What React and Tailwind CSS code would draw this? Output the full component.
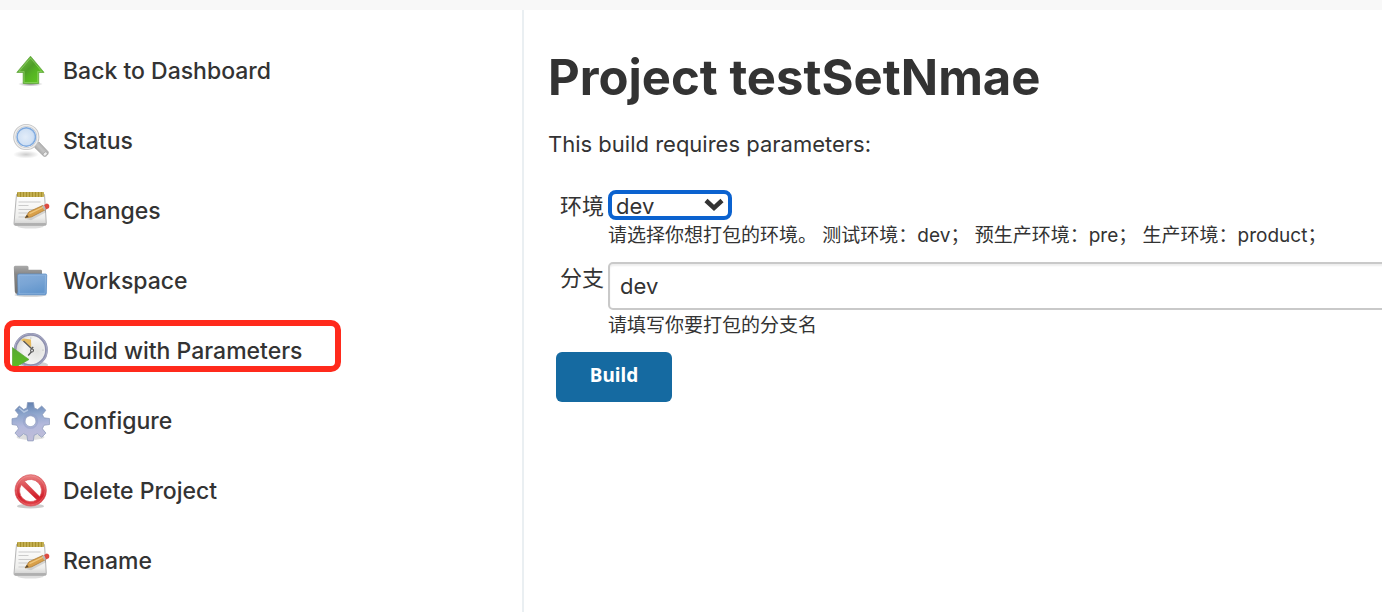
import React from "react";

function UpArrowIcon() {
  return (
    <svg viewBox="0 0 36 36" className="size-9" aria-hidden="true">
      <defs>
        <linearGradient id="up-fill" x1="0" y1="0" x2="1" y2="1">
          <stop offset="0" stopColor="#7fc94e" />
          <stop offset="0.45" stopColor="#4f9e28" />
          <stop offset="0.6" stopColor="#55b322" />
          <stop offset="1" stopColor="#62cc20" />
        </linearGradient>
        <radialGradient id="up-shadow">
          <stop offset="0" stopColor="#000" stopOpacity="0.45" />
          <stop offset="1" stopColor="#000" stopOpacity="0" />
        </radialGradient>
      </defs>
      <ellipse cx="18.500" cy="31" rx="12.500" ry="2.500" fill="url(#up-shadow)" />
      <path d="M18.500 3.200 32 19.400H26.700V30.500H11.200V19.400H4.800Z" fill="url(#up-fill)" stroke="#63a83f" strokeWidth="0.800" strokeLinejoin="round" />
      <path d="M18.500 5 29.700 18.500H25.700V29.500H12.200V18.500H7Z" fill="none" stroke="#b0e58c" strokeOpacity="0.5" strokeWidth="0.900" />
    </svg>
  );
}

function SearchIcon() {
  return (
    <svg viewBox="0 0 36 36" className="size-9 overflow-visible" aria-hidden="true">
      <defs>
        <radialGradient id="lens" cx="0.45" cy="0.5" r="0.6">
          <stop offset="0" stopColor="#e3edf9" />
          <stop offset="0.7" stopColor="#cfe0f4" />
          <stop offset="1" stopColor="#a3c4ea" />
        </radialGradient>
        <radialGradient id="lens-shadow">
          <stop offset="0" stopColor="#000" stopOpacity="0.2" />
          <stop offset="1" stopColor="#000" stopOpacity="0" />
        </radialGradient>
        <linearGradient id="handle" x1="0" y1="1" x2="1" y2="0">
          <stop offset="0" stopColor="#858585" />
          <stop offset="0.5" stopColor="#c4c4c4" />
          <stop offset="1" stopColor="#8a8a8a" />
        </linearGradient>
      </defs>
      <ellipse cx="14" cy="31.500" rx="13" ry="4" fill="url(#lens-shadow)" />
      <path d="m23.500 22 3.500-3 9 9.500c1.500 2-2.200 6.300-4.500 4.500L22.700 24.500Z" fill="url(#handle)" stroke="#999" strokeWidth="0.600" />
      <ellipse cx="33.200" cy="31" rx="2.300" ry="1.700" transform="rotate(-45 33.200 31)" fill="#eee" stroke="#999" strokeWidth="0.600" />
      <circle cx="14.300" cy="14" r="11.700" fill="#fff" stroke="#c4c4c4" strokeWidth="2.800" />
      <circle cx="14.300" cy="14" r="11.500" fill="none" stroke="#eee" strokeWidth="1.400" />
      <circle cx="14.300" cy="14" r="9.300" fill="url(#lens)" stroke="#7ea9de" strokeWidth="1.500" />
    </svg>
  );
}

function NotepadIcon({ id }) {
  return (
    <svg viewBox="0 0 36 36" className="size-9 overflow-visible" aria-hidden="true">
      <defs>
        <linearGradient id={id} x1="0" y1="0" x2="0" y2="1">
          <stop offset="0" stopColor="#fff" />
          <stop offset="0.75" stopColor="#eeeeec" />
          <stop offset="1" stopColor="#ccc" />
        </linearGradient>
      </defs>
      <ellipse cx="18.500" cy="33.500" rx="13" ry="2" fill="#000" fillOpacity="0.13" />
      <path d="M4.500 1.500h28l1.800 29q.2 2-1.800 2H4q-2.200 0-2-2Z" fill={`url(#${id})`} stroke="#b5b5b5" strokeWidth="1" />
      <path d="M2.500 31h31.300" stroke="#999" strokeWidth="1.200" />
      <rect x="5" y="-1" width="27" height="5" rx="1" fill="#a8912e" />
      <path d="M7-1v5m3-5v5m3-5v5m3-5v5m3-5v5m3-5v5m3-5v5m3-5v5m3-5v5" stroke="#d5c268" strokeWidth="1.200" />
      <path d="M6.500 9h22M6.500 12.500h10M6.500 16.500h18M6.500 20h14M6.500 24h9" stroke="#cbcbcb" strokeWidth="1" />
      <path d="m14 26 5 1.300 15-8v-3Z" fill="#000" fillOpacity="0.12" />
      <path d="m13 25 4-6.200 14-6.500 2.500 4.400-14 7.200Z" fill="#d9a04a" stroke="#a87a38" strokeWidth="0.700" />
      <path d="m17.500 20.700 14-6.700" stroke="#f0c77c" strokeWidth="1.300" />
      <path d="m13 25 2-3.300 1.700 2.400Z" fill="#5d4b33" />
      <path d="m30 13 2.200 4.200 1.700-.9-2.100-4.200Z" fill="#b8b8b8" />
      <path d="m32 12 2.200 4.400 2.800-1.500q1.300-3.500-2.300-4.400Z" fill="#dc4a40" />
    </svg>
  );
}

function FolderIcon() {
  return (
    <svg viewBox="0 0 36 36" className="size-9" aria-hidden="true">
      <defs>
        <linearGradient id="folder-back" x1="0" y1="0" x2="0" y2="1">
          <stop offset="0" stopColor="#aaa" />
          <stop offset="0.3" stopColor="#868686" />
          <stop offset="1" stopColor="#707070" />
        </linearGradient>
        <linearGradient id="folder-front" x1="0" y1="0" x2="0.4" y2="1">
          <stop offset="0" stopColor="#86add9" />
          <stop offset="0.5" stopColor="#7aa5d5" />
          <stop offset="1" stopColor="#6497cd" />
        </linearGradient>
      </defs>
      <ellipse cx="18.500" cy="32" rx="16" ry="2" fill="#000" fillOpacity="0.15" />
      <path d="M1.800 4.300q0-1.500 1.500-1.500H15q1.500 0 1.500 1.500v2.500h12.300q1.200 0 1.200 1.300V31H5.500q-2.500 0-2.700-2.500Z" fill="url(#folder-back)" />
      <path d="M7 11h26.500q1.300 0 1.200 1.300L34.300 30.500q-.1 1.300-1.400 1.300H5Q6 30.500 6 28.500L5.700 12.300q0-1.300 1.300-1.300Z" fill="url(#folder-front)" stroke="#5f8fc5" strokeWidth="0.800" />
      <path d="M6.800 12.100h26.700l-.4 18.300H7Z" fill="none" stroke="#a9c7e9" strokeOpacity="0.5" strokeWidth="0.800" />
    </svg>
  );
}

function ClockPlayIcon() {
  return (
    <svg viewBox="0 0 36 36" className="size-9" aria-hidden="true">
      <defs>
        <radialGradient id="dial" cx="0.7" cy="0.55" r="0.7">
          <stop offset="0" stopColor="#e2e2df" />
          <stop offset="0.6" stopColor="#f4f4f3" />
          <stop offset="1" stopColor="#d7d7d5" />
        </radialGradient>
        <linearGradient id="play" x1="0" y1="0" x2="0" y2="1">
          <stop offset="0" stopColor="#58a832" />
          <stop offset="1" stopColor="#5cc022" />
        </linearGradient>
      </defs>
      <ellipse cx="22" cy="32" rx="14" ry="3.500" fill="#000" fillOpacity="0.18" />
      <circle cx="18.800" cy="17" r="15.700" fill="url(#dial)" stroke="#8d8fae" strokeWidth="2.800" />
      <circle cx="18.800" cy="17" r="16.300" fill="none" stroke="#b6b7ce" strokeWidth="0.700" />
      <path d="m9 7 2.500-1.500 7.500 1 .3 8Z" fill="#e6bb60" />
      <path d="m11.500 8 9.500 9-4.800 5.500M19.500 15.500l1.800-1.500" fill="none" stroke="#5a5a5a" strokeWidth="1.300" />
      <circle cx="20" cy="17.500" r="1.900" fill="#555" />
      <circle cx="20" cy="17.500" r="0.900" fill="#eee" />
      <circle cx="31" cy="17" r="0.600" fill="#aaa" />
      <circle cx="18.800" cy="5" r="0.600" fill="#aaa" />
      <path d="M.3 14.500 17 26.500 .3 36Z" fill="url(#play)" stroke="#5ba53a" strokeWidth="0.700" />
    </svg>
  );
}

function GearIcon() {
  return (
    <svg viewBox="0 0 36 36" className="size-9 overflow-visible" aria-hidden="true">
      <defs>
        <linearGradient id="gear" x1="0.5" y1="0" x2="0.6" y2="1">
          <stop offset="0" stopColor="#6482b0" />
          <stop offset="0.3" stopColor="#8ea6cd" />
          <stop offset="0.6" stopColor="#b4b9dc" />
          <stop offset="1" stopColor="#c0bdd8" />
        </linearGradient>
      </defs>
      <ellipse cx="18.500" cy="34" rx="14" ry="3" fill="#000" fillOpacity="0.13" />
      <path
        fillRule="evenodd"
        d="M15.500-.5h6l.8 5.500 3.400 1.500 4-3.500 4.200 4.200-3.500 4.300 1.500 3.300 5.600.7v6l-5.600.8-1.500 3.500 3.500 4.300-4.200 4.200-4.300-3.500-3.300 1.500-.8 5.600h-5.600l-.8-5.600-3.500-1.500-4.300 3.500-4.100-4.200 3.500-4.300-1.500-3.500L0 21.500v-5.800l5.200-.9 1.400-3.300-3.500-4.300L7.300 3l4.300 3.500L14.800 5ZM18.500 12.800a5.400 5.400 0 1 0 .01 0Z"
        fill="url(#gear)"
        stroke="#8796b8"
        strokeWidth="0.700"
        strokeLinejoin="round"
      />
      <circle cx="18.500" cy="18.200" r="7" fill="none" stroke="#8b98c2" strokeOpacity="0.400" strokeWidth="1.500" />
      <path d="M7 5 12 9l4-2" fill="none" stroke="#d6e2f3" strokeOpacity="0.600" strokeWidth="1.500" />
    </svg>
  );
}

function ForbiddenIcon() {
  return (
    <svg viewBox="0 0 36 36" className="size-9" aria-hidden="true">
      <defs>
        <linearGradient id="ban" x1="0" y1="0" x2="0" y2="1">
          <stop offset="0" stopColor="#e98384" />
          <stop offset="0.4" stopColor="#dc4a50" />
          <stop offset="0.7" stopColor="#d21f2b" />
          <stop offset="1" stopColor="#e34b50" />
        </linearGradient>
      </defs>
      <ellipse cx="18.500" cy="33.200" rx="13.500" ry="2.300" fill="#000" fillOpacity="0.2" />
      <path
        fillRule="evenodd"
        d="M18.700 1.700a15.700 15.700 0 1 0 .01 0ZM12.400 8.300a11 11 0 0 1 15.300 15.200ZM9.300 11.700 24.800 26.700A11 11 0 0 1 9.300 11.700Z"
        fill="url(#ban)"
        stroke="#d9555a"
        strokeWidth="0.700"
      />
      <circle cx="18.700" cy="17.400" r="14.500" fill="none" stroke="#f5a9a9" strokeOpacity="0.400" strokeWidth="0.800" />
    </svg>
  );
}

const tasks = [
  { label: "Back to Dashboard", icon: <UpArrowIcon /> },
  { label: "Status", icon: <SearchIcon /> },
  { label: "Changes", icon: <NotepadIcon id="paper-changes" /> },
  { label: "Workspace", icon: <FolderIcon /> },
  { label: "Build with Parameters", icon: <ClockPlayIcon />, marked: true },
  { label: "Configure", icon: <GearIcon /> },
  { label: "Delete Project", icon: <ForbiddenIcon /> },
  { label: "Rename", icon: <NotepadIcon id="paper-rename" /> },
];

function TaskLink({ label, icon, marked }) {
  return (
    <li className="relative">
      <a href="#" className="flex h-[70px] items-center gap-[15px] pl-3 text-[23px] font-medium">
        {icon}
        <span>{label}</span>
      </a>
      {marked && (
        <span className="pointer-events-none absolute top-1 left-1 h-[52px] w-[337px] rounded-[10px] border-6 border-[#ff2a1c]" />
      )}
    </li>
  );
}

export default function App() {
  return (
    <div className="flex min-h-screen flex-col overflow-hidden bg-white font-['Inter','Noto_Sans_CJK_SC',sans-serif] text-[#333]">
      <header className="h-[10px] bg-[#f8f8f8]" />
      <div className="flex flex-1">
        <nav className="w-[524px] shrink-0 border-r-2 border-[#eaeff2] pt-[26px]">
          <ul>
            {tasks.map((task) => (
              <TaskLink key={task.label} {...task} />
            ))}
          </ul>
        </nav>
        <main className="min-w-0 flex-1 pt-9 pl-6">
          <h1 className="text-[49px] leading-[64px] font-bold">Project testSetNmae</h1>
          <p className="mt-5 text-[22px] leading-[28px]">This build requires parameters:</p>
          <form className="-mr-2 pt-8 pl-2" onSubmit={(e) => e.preventDefault()}>
            <div className="grid grid-cols-[auto_1fr] gap-x-1 pl-1 text-[22px]">
              <label htmlFor="env" className="leading-[32px]">环境</label>
              <div>
                <div className="relative w-[124px]">
                  <select
                    id="env"
                    defaultValue="dev"
                    className="block h-[30px] w-full appearance-none rounded-[8px] border-4 border-[#0b62cf] bg-white pt-px pl-1 leading-[22px] outline-none"
                  >
                    <option>dev</option>
                    <option>pre</option>
                    <option>product</option>
                  </select>
                  <svg viewBox="0 0 20 14" className="pointer-events-none absolute top-2 right-2 h-[14px] w-5" aria-hidden="true">
                    <path d="m2 2.500 8 7.500 8-7.500" fill="none" stroke="#333" strokeWidth="4.500" />
                  </svg>
                </div>
                <p className="h-[42px] text-[19px] leading-[32px]">
                  请选择你想打包的环境。 测试环境：dev； 预生产环境：pre； 生产环境：product；
                </p>
              </div>
              <label htmlFor="branch" className="leading-[32px]">分支</label>
              <div>
                <input
                  id="branch"
                  type="text"
                  defaultValue="dev"
                  className="block h-12 w-full rounded-[5px] border-2 border-[#c9c9c9] bg-white px-[10px] shadow-[inset_0_2px_2px_rgba(0,0,0,0.07)] outline-none"
                />
                <p className="text-[19px] leading-[32px]">请填写你要打包的分支名</p>
              </div>
            </div>
            <button
              type="submit"
              className="mt-[10px] h-[50px] w-[116px] rounded-[6px] bg-[#156aa1] pb-1 font-['Noto_Sans',sans-serif] text-[19px] font-bold text-white"
            >
              Build
            </button>
          </form>
        </main>
      </div>
    </div>
  );
}
